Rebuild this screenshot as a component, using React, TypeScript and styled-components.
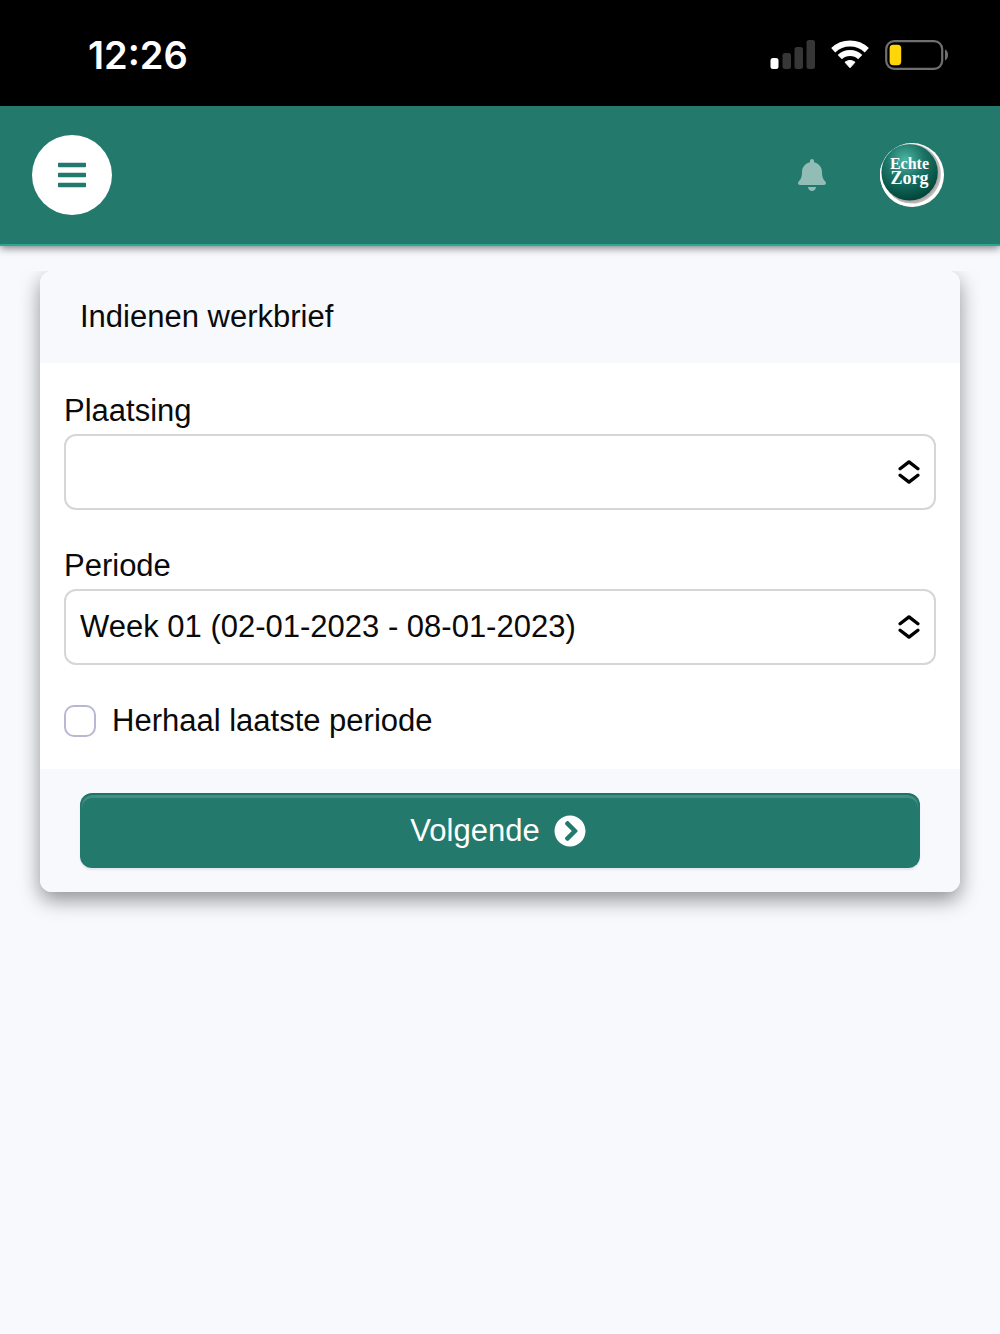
import React, { useState } from 'react';
import styled, { createGlobalStyle } from 'styled-components';
import { FaBars, FaBell, FaChevronCircleRight } from 'react-icons/fa';

const GlobalStyle = createGlobalStyle`
  *, *::before, *::after { box-sizing: border-box; }
  body {
    margin: 0;
    background: #f8f9fd;
    color: #0a0a0a;
    font-family: "Liberation Sans", Arial, sans-serif;
    font-size: 31px;
    line-height: 48px;
  }
  button, select, input { font: inherit; color: inherit; }
`;

const Screen = styled.div`
  min-height: 100vh;
`;

const StatusBar = styled.div`
  display: flex;
  align-items: center;
  justify-content: space-between;
  height: 106px;
  padding: 4px 52px 0 88px;
  background: #000;
  color: #fff;
`;

const Clock = styled.time`
  font-family: Inter, sans-serif;
  font-size: 38px;
  font-weight: 600;
`;

const StatusIcons = styled.div`
  display: flex;
  align-items: center;
  gap: 16px;

  svg { display: block; }
`;

const TopBar = styled.header`
  display: flex;
  align-items: center;
  justify-content: space-between;
  height: 140px;
  padding: 0 56px 0 32px;
  background: #24796d;
  border-bottom: 2px solid #2ba892;
  box-shadow: 0 2px 8px rgba(0, 0, 0, 0.5);
`;

const TopActions = styled.div`
  display: flex;
  align-items: center;
  gap: 36px;
`;

const IconButton = styled.button<{ $size: number; $filled?: boolean }>`
  display: flex;
  align-items: center;
  justify-content: center;
  width: ${(p) => p.$size}px;
  height: ${(p) => p.$size}px;
  padding: 0;
  border: 0;
  border-radius: 50%;
  background: ${(p) => (p.$filled ? '#fff' : 'transparent')};
  color: ${(p) => (p.$filled ? '#24796d' : 'rgba(255, 255, 255, 0.5)')};
  cursor: pointer;
`;

const Main = styled.main`
  margin-top: 25px;
  padding: 0 40px 40px;
  overflow: hidden;
`;

const Card = styled.form`
  border-radius: 12px;
  background: #fff;
  box-shadow: 0 8px 20px rgba(0, 0, 0, 0.42);
`;

const CardHeader = styled.h1`
  margin: 0;
  padding: 22px 40px;
  border-radius: 12px 12px 0 0;
  background: #f8f9fd;
  font-size: 31px;
  font-weight: 400;
  line-height: 48px;
`;

const CardBody = styled.div`
  display: flex;
  flex-direction: column;
  gap: 32px;
  padding: 24px;
`;

const Field = styled.div`
  display: flex;
  flex-direction: column;
`;

const Label = styled.label`
  line-height: 47px;
`;

const SelectBox = styled.div`
  display: grid;
  align-items: center;

  > * { grid-area: 1 / 1; }
  > svg {
    justify-self: end;
    margin-right: 16px;
    pointer-events: none;
  }
`;

const Select = styled.select`
  appearance: none;
  width: 100%;
  height: 76px;
  padding: 0 56px 0 14px;
  border: 2px solid #d6d6d6;
  border-radius: 12px;
  background: #fff;
`;

const CheckRow = styled.label`
  display: flex;
  align-items: center;
  gap: 16px;
`;

const Checkbox = styled.input`
  appearance: none;
  width: 32px;
  height: 32px;
  margin: 0;
  border: 2px solid #b9b8d3;
  border-radius: 10px;
  background: #fff;

  &:checked {
    border-color: #24796d;
    background: #24796d;
    box-shadow: inset 0 0 0 5px #fff;
  }
`;

const CardFooter = styled.footer`
  padding: 24px 40px;
  border-radius: 0 0 12px 12px;
  background: #f8f9fd;
`;

const SubmitButton = styled.button`
  display: flex;
  align-items: center;
  justify-content: center;
  gap: 14px;
  width: 100%;
  height: 75px;
  padding: 0 4px 0 0;
  border: 2px solid #24796d;
  border-top-color: #1a7567;
  border-radius: 12px;
  background: #24796d;
  box-shadow: inset 0 3px 0 rgba(255, 255, 255, 0.15), 0 2px 2px rgba(0, 0, 0, 0.08);
  color: #fff;
  cursor: pointer;
`;

function SignalIcon() {
  return (
    <svg width="45" height="30" viewBox="0 0 45 30" aria-hidden="true">
      <rect x="0.5" y="18" width="8" height="11" rx="2.5" fill="#fff" />
      <g fill="#363636">
        <rect x="12.5" y="13" width="8.5" height="16" rx="2.5" />
        <rect x="24.5" y="7" width="8.5" height="22" rx="2.5" />
        <rect x="36.5" y="0" width="8.5" height="29" rx="2.5" />
      </g>
    </svg>
  );
}

function WifiIcon() {
  return (
    <svg width="38" height="30" viewBox="0 0 38 30" aria-hidden="true">
      <g fill="none" stroke="#fff" strokeWidth="6">
        <path d="M2.2 10.2A24.5 24.5 0 0 1 35.8 10.2" />
        <path d="M8.8 17.2A14.6 14.6 0 0 1 29.2 17.2" />
      </g>
      <path
        d="M14 22.2Q19 18.6 24 22.2L19 27.8Z"
        fill="#fff"
        stroke="#fff"
        strokeWidth="1"
        strokeLinejoin="round"
      />
    </svg>
  );
}

function BatteryIcon() {
  return (
    <svg width="63" height="30" viewBox="0 0 63 30" aria-hidden="true">
      <rect x="1.2" y="1.2" width="56" height="27.6" rx="8" fill="none" stroke="#6f6f72" strokeWidth="2.2" />
      <rect x="4.6" y="4.8" width="11.6" height="20.4" rx="3.6" fill="#ffd60a" />
      <path d="M60 9.6Q63 11 63 15Q63 19 60 20.4Z" fill="#6f6f72" />
    </svg>
  );
}

function SortIcon() {
  return (
    <svg width="22" height="26" viewBox="0 0 22 26" fill="none" aria-hidden="true">
      <path
        d="M2.1 9.8L11 2.9L19.9 9.8M2.1 16.2L11 23.1L19.9 16.2"
        stroke="#000"
        strokeWidth="3.3"
        strokeLinecap="round"
        strokeLinejoin="round"
      />
    </svg>
  );
}

function Logo() {
  return (
    <svg width="64" height="64" viewBox="0 0 64 64" role="img" aria-label="Echte Zorg">
      <defs>
        <radialGradient id="ball" cx="0.42" cy="0.28" r="0.76">
          <stop offset="0" stopColor="#4db5a3" />
          <stop offset="0.45" stopColor="#1b7466" />
          <stop offset="0.85" stopColor="#054f43" />
          <stop offset="1" stopColor="#043e35" />
        </radialGradient>
        <radialGradient id="rim" gradientUnits="userSpaceOnUse" cx="30.5" cy="30.5" r="32">
          <stop offset="0.86" stopColor="#a9a5a5" />
          <stop offset="0.95" stopColor="#c9c6c6" />
          <stop offset="0.98" stopColor="#fff" />
        </radialGradient>
      </defs>
      <circle cx="32" cy="32" r="32" fill="#fff" />
      <circle cx="31" cy="31" r="30" fill="url(#rim)" />
      <path d="M3 22A30.5 30.5 0 0 0 34 62" fill="none" stroke="#fff" strokeWidth="3" />
      <circle cx="29.6" cy="29.4" r="28.2" fill="url(#ball)" />
      <text fill="#fff" fontFamily="'Liberation Serif', serif" fontWeight="700" textAnchor="middle">
        <tspan x="29.5" y="26" fontSize="16">Echte</tspan>
        <tspan x="29.5" y="41" fontSize="18">Zorg</tspan>
      </text>
    </svg>
  );
}

export default function App() {
  const [placement, setPlacement] = useState('');
  const [repeat, setRepeat] = useState(false);

  return (
    <Screen>
      <GlobalStyle />
      <StatusBar>
        <Clock>12:26</Clock>
        <StatusIcons>
          <SignalIcon />
          <WifiIcon />
          <BatteryIcon />
        </StatusIcons>
      </StatusBar>
      <TopBar>
        <IconButton type="button" $size={80} $filled aria-label="Menu">
          <FaBars size={32} />
        </IconButton>
        <TopActions>
          <IconButton type="button" $size={64} aria-label="Meldingen">
            <FaBell size={32} />
          </IconButton>
          <IconButton type="button" $size={64} aria-label="Account">
            <Logo />
          </IconButton>
        </TopActions>
      </TopBar>
      <Main>
        <Card onSubmit={(e) => e.preventDefault()}>
          <CardHeader>Indienen werkbrief</CardHeader>
          <CardBody>
            <Field>
              <Label htmlFor="plaatsing">Plaatsing</Label>
              <SelectBox>
                <Select id="plaatsing" value={placement} onChange={(e) => setPlacement(e.target.value)}>
                  <option value="" />
                </Select>
                <SortIcon />
              </SelectBox>
            </Field>
            <Field>
              <Label htmlFor="periode">Periode</Label>
              <SelectBox>
                <Select id="periode" defaultValue="2023-01">
                  <option value="2023-01">Week 01 (02-01-2023 - 08-01-2023)</option>
                </Select>
                <SortIcon />
              </SelectBox>
            </Field>
            <CheckRow>
              <Checkbox type="checkbox" checked={repeat} onChange={(e) => setRepeat(e.target.checked)} />
              Herhaal laatste periode
            </CheckRow>
          </CardBody>
          <CardFooter>
            <SubmitButton type="submit">
              Volgende
              <FaChevronCircleRight size={32} />
            </SubmitButton>
          </CardFooter>
        </Card>
      </Main>
    </Screen>
  );
}
